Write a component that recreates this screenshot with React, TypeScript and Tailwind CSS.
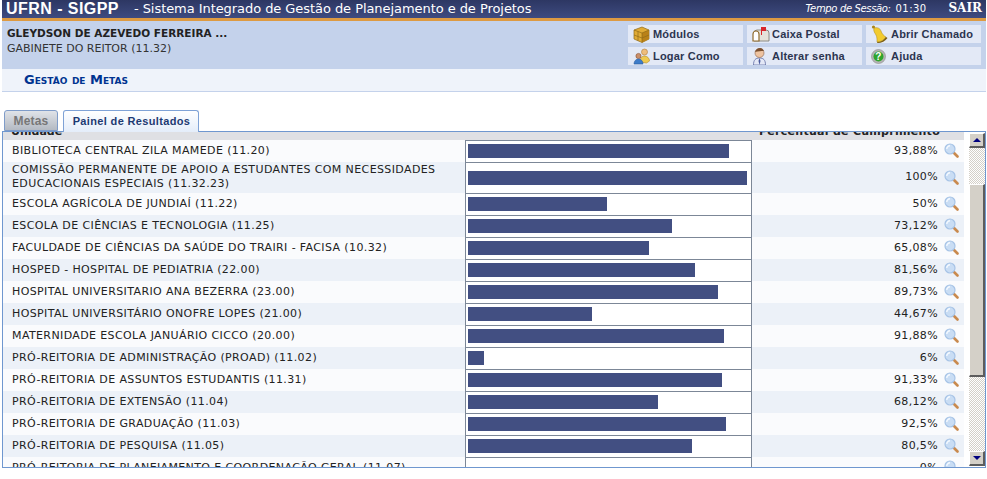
import type { ReactNode } from 'react';

const rows = [
  { name: 'BIBLIOTECA CENTRAL ZILA MAMEDE (11.20)', pct: '93,88%', w: 261 },
  { name: 'COMISSÃO PERMANENTE DE APOIO A ESTUDANTES COM NECESSIDADES EDUCACIONAIS ESPECIAIS (11.32.23)', pct: '100%', w: 279 },
  { name: 'ESCOLA AGRÍCOLA DE JUNDIAÍ (11.22)', pct: '50%', w: 139 },
  { name: 'ESCOLA DE CIÊNCIAS E TECNOLOGIA (11.25)', pct: '73,12%', w: 204 },
  { name: 'FACULDADE DE CIÊNCIAS DA SAÚDE DO TRAIRI - FACISA (10.32)', pct: '65,08%', w: 181 },
  { name: 'HOSPED - HOSPITAL DE PEDIATRIA (22.00)', pct: '81,56%', w: 227 },
  { name: 'HOSPITAL UNIVERSITARIO ANA BEZERRA (23.00)', pct: '89,73%', w: 250 },
  { name: 'HOSPITAL UNIVERSITÁRIO ONOFRE LOPES (21.00)', pct: '44,67%', w: 124 },
  { name: 'MATERNIDADE ESCOLA JANUÁRIO CICCO (20.00)', pct: '91,88%', w: 256 },
  { name: 'PRÓ-REITORIA DE ADMINISTRAÇÃO (PROAD) (11.02)', pct: '6%', w: 16 },
  { name: 'PRÓ-REITORIA DE ASSUNTOS ESTUDANTIS (11.31)', pct: '91,33%', w: 254 },
  { name: 'PRÓ-REITORIA DE EXTENSÃO (11.04)', pct: '68,12%', w: 190 },
  { name: 'PRÓ-REITORIA DE GRADUAÇÃO (11.03)', pct: '92,5%', w: 258 },
  { name: 'PRÓ-REITORIA DE PESQUISA (11.05)', pct: '80,5%', w: 224 },
  { name: 'PRÓ-REITORIA DE PLANEJAMENTO E COORDENAÇÃO GERAL (11.07)', pct: '0%', w: 0 },
];

function Lupa() {
  return (
    <svg width="15" height="15" viewBox="0 0 15 15" className="shrink-0">
      <path d="M9.500 9.500l4 4" stroke="#c98a4e" strokeWidth="2.600" strokeLinecap="round" />
      <circle cx="6" cy="6" r="5" fill="#c9ddf4" stroke="#a6c3e6" strokeWidth="1.200" />
      <path d="M2.800 6a3.200 3.200 0 0 1 3.200-3.200" stroke="#f4f9ff" strokeWidth="1.400" fill="none" />
    </svg>
  );
}

function Caixa() {
  return (
    <svg width="17" height="17" viewBox="0 0 17 17">
      <path d="M1 4l8-3 7 3v9l-7 3.500-8-3.500z" fill="#e0ab35" stroke="#8f6a17" strokeWidth=".7" />
      <path d="M9 7l7-3v9l-7 3.500z" fill="#b98118" />
      <path d="M1 4l8 3 7-3M9 7v9.500M5 5.500v9M1 9l8 3 7-3" stroke="#8f6a17" strokeWidth=".7" fill="none" />
    </svg>
  );
}

function Correio() {
  return (
    <svg width="18" height="17" viewBox="0 0 18 17">
      <path d="M2 7a3 3 0 0 1 3-3h9a3 3 0 0 1 3 3v8H2z" fill="#e6e3db" stroke="#77736a" strokeWidth=".8" />
      <path d="M1 8a3 3 0 0 1 6 0v7H1z" fill="#fff" stroke="#8f6a2c" strokeWidth="1.200" />
      <path d="M9 1h5v4h-4v4H9z" fill="#d8262c" />
    </svg>
  );
}

function Sino() {
  return (
    <svg width="18" height="18" viewBox="0 0 18 18">
      <circle cx="2.500" cy="2" r="1.600" fill="#a9851a" />
      <path d="M3 3c3-1 6 0 7 3 1 3 3 5 5 6-2 3-5 5-9 5 0-3 0-5-1-7S2 6 3 3z" fill="#f2cb2e" stroke="#a9851a" strokeWidth=".5" />
      <path d="M6 17c4 0 7-2 9-5l1.500 1c-2 3-6 5-10 5z" fill="#7d5f10" />
    </svg>
  );
}

function Usuarios() {
  return (
    <svg width="18" height="17" viewBox="0 0 18 17">
      <circle cx="11.500" cy="4" r="3" fill="#eebd7c" stroke="#b27d3a" strokeWidth=".6" />
      <path d="M7 14c0-4 2-6 4.500-6s5 2 5 5l-3 2z" fill="#eec94f" stroke="#b28a2a" strokeWidth=".6" />
      <circle cx="5.500" cy="8" r="2.600" fill="#c98f6a" stroke="#8a4f2c" strokeWidth=".6" />
      <path d="M1 16c0-3 2-5 4.500-5s4.500 2 4.500 5z" fill="#3d7cc9" stroke="#2a5b9c" strokeWidth=".6" />
    </svg>
  );
}

function Homem() {
  return (
    <svg width="15" height="18" viewBox="0 0 15 18">
      <path d="M1.500 18c0-5 2-7 6-7s6 2 6 7z" fill="#e4e8f6" stroke="#626fa3" strokeWidth=".8" />
      <path d="M7.500 11l-1 3 1 4 1-4z" fill="#4a5a9c" />
      <circle cx="7.500" cy="6" r="4.500" fill="#eec3a0" stroke="#8a6248" strokeWidth=".6" />
      <path d="M3 5c1-3 3-4 5-4s3 1 4 3c-3 0-6 0-9 1z" fill="#7a4f2e" />
    </svg>
  );
}

function Interrogacao() {
  return (
    <svg width="15" height="15" viewBox="0 0 15 15">
      <circle cx="7.500" cy="7.500" r="7" fill="#b5b5b5" stroke="#8c8c8c" strokeWidth=".6" />
      <circle cx="7.500" cy="7.500" r="5" fill="#2fa52c" />
      <text x="7.500" y="11" textAnchor="middle" fontSize="10" fontWeight="700" fill="#fff" fontFamily="'Liberation Sans', sans-serif">?</text>
    </svg>
  );
}

function Atalho({ icon, children }: { icon: ReactNode; children: ReactNode }) {
  return (
    <a className="flex h-[18px] items-center whitespace-nowrap bg-[#e3e9f6] pl-[5px] font-['Liberation_Sans',Arial,sans-serif] text-[11px] font-bold leading-none tracking-[.2px] text-[#2c3550]">
      <span className="flex w-[20px] shrink-0 items-center justify-start">{icon}</span>
      {children}
    </a>
  );
}

function BotaoRolagem({ dir }: { dir: 'up' | 'down' }) {
  return (
    <div className="flex h-[15px] w-[16px] shrink-0 items-center justify-center border-t border-l border-t-white border-l-white border-r-2 border-b-2 border-r-[#5d5d5d] border-b-[#5d5d5d] bg-[#d4d0c8]">
      <div
        className={
          dir === 'up'
            ? 'h-0 w-0 border-x-[4px] border-b-[4px] border-x-transparent border-b-[#00007f]'
            : 'h-0 w-0 border-x-[4px] border-t-[4px] border-x-transparent border-t-[#00007f]'
        }
      />
    </div>
  );
}

export default function App() {
  return (
    <div className="min-h-[479px] bg-white pl-[2px] pr-[1px] font-['DejaVu_Sans',Verdana,sans-serif] text-[#222]">
      <header className="flex h-[21px] items-start border-b-[3px] border-[#dd9a42] bg-gradient-to-b from-[#2d3763] to-[#3e4b80] text-white">
        <span className="ml-[4px] font-['Liberation_Sans',Arial,sans-serif] text-[16px] font-bold leading-[17px] tracking-[.45px]">UFRN - SIGPP</span>
        <span className="ml-[15px] text-[13px] leading-[18px] tracking-[-.06px]">- Sistema Integrado de Gestão de Planejamento e de Projetos</span>
        <span className="ml-auto text-[10px] italic leading-[18px] tracking-[-.35px]">Tempo de Sessão:</span>
        <span className="ml-[5px] text-[10px] leading-[18px] tracking-[.4px]">01:30</span>
        <span className="ml-[22px] mr-[4px] font-['DejaVu_Serif','Liberation_Serif',serif] text-[12px] font-bold leading-[17px]">SAIR</span>
      </header>

      <section className="flex h-[48px] items-start justify-between bg-[#c4d2eb] pl-[5px] pr-[5px]">
        <div className="pt-[5px] leading-[15px]">
          <p className="text-[10.5px] font-bold text-[#222]">GLEYDSON DE AZEVEDO FERREIRA ...</p>
          <p className="text-[11px] text-[#333]">GABINETE DO REITOR (11.32)</p>
        </div>
        <nav className="mt-[4px] grid grid-cols-[115px_115px_115px] gap-x-[4px] gap-y-[4px]">
          <Atalho icon={<Caixa />}>Módulos</Atalho>
          <Atalho icon={<Correio />}>Caixa Postal</Atalho>
          <Atalho icon={<Sino />}>Abrir Chamado</Atalho>
          <Atalho icon={<Usuarios />}>Logar Como</Atalho>
          <Atalho icon={<Homem />}>Alterar senha</Atalho>
          <Atalho icon={<Interrogacao />}>Ajuda</Atalho>
        </nav>
      </section>

      <div className="flex h-[23px] items-center border-b border-[#c4d2eb] bg-[#eff3fa] pl-[22px] text-[13px] font-bold text-[#003390] [font-variant:small-caps]">
        Gestão de Metas
      </div>

      <div className="mt-[18px] flex h-[21px] items-end gap-[5px] pl-[2px]">
        <div className="flex h-[21px] w-[54px] items-center justify-center rounded-t-[3px] border border-[#7f9cc9] bg-gradient-to-b from-[#e0e3e8] to-[#b4bac3] font-['Liberation_Sans',Arial,sans-serif] text-[12px] font-bold tracking-[.2px] text-[#777]">
          Metas
        </div>
        <div className="relative z-10 -mb-px flex h-[22px] w-[136px] items-center justify-center rounded-t-[3px] border border-b-0 border-[#7fa2d6] bg-gradient-to-b from-white to-[#e4edfa] pl-[1px] font-['Liberation_Sans',Arial,sans-serif] text-[11px] font-bold tracking-[.35px] text-[#1d3a73]">
          Painel de Resultados
        </div>
      </div>

      <main className="flex h-[337px] overflow-hidden border border-[#6f97cf] bg-white">
        <div className="h-full w-[961px] shrink-0 overflow-hidden">
          <table className="-mt-[15px] w-full table-fixed border-collapse text-[11px] leading-[14px] text-[#222]">
            <colgroup>
              <col className="w-[462px]" />
              <col className="w-[286px]" />
              <col />
              <col className="w-[26px]" />
            </colgroup>
            <thead>
              <tr className="h-[23px] bg-[#dfe0e4] text-[#222]">
                <th className="pl-[8px] pb-[1px] text-left align-bottom font-bold">Unidade</th>
                <th />
                <th colSpan={2} className="pr-[24px] pb-[1px] text-right align-bottom font-bold tracking-[.28px]">Percentual de Cumprimento</th>
              </tr>
            </thead>
            <tbody>
              {rows.map((r, i) => (
                <tr key={r.name} className={i % 2 === 0 ? 'h-[22px] bg-[#fafbfd]' : 'h-[22px] bg-[#ecf1f8]'}>
                  <td className="pt-[1px] pb-[2px] pl-[9px] pr-[8px] tracking-[.035em]">{r.name}</td>
                  <td className="border border-[#7c8797] bg-white px-[2px]">
                    {r.w > 0 && (
                      <div className="h-[14px] bg-[#424f82]" style={{ width: r.w }} />
                    )}
                  </td>
                  <td className="pb-[1px] text-right tracking-[.35px]">{r.pct}</td>
                  <td className="pl-[6px] pb-[1px]"><Lupa /></td>
                </tr>
              ))}
            </tbody>
          </table>
        </div>

        <aside className="ml-[5px] flex h-full w-[17px] flex-col pt-[1px] pb-[1px]">
          <BotaoRolagem dir="up" />
          <div className="h-[36px] w-[16px] bg-[repeating-conic-gradient(#d4d0c8_0_25%,#fff_0_50%)] bg-[length:2px_2px]" />
          <div className="h-[193px] w-[16px] border-t border-l border-t-white border-l-white border-r-2 border-b-2 border-r-[#5d5d5d] border-b-[#5d5d5d] bg-[#d4d0c8]" />
          <div className="min-h-0 w-[16px] flex-1 bg-[repeating-conic-gradient(#d4d0c8_0_25%,#fff_0_50%)] bg-[length:2px_2px]" />
          <BotaoRolagem dir="down" />
        </aside>
      </main>
    </div>
  );
}
